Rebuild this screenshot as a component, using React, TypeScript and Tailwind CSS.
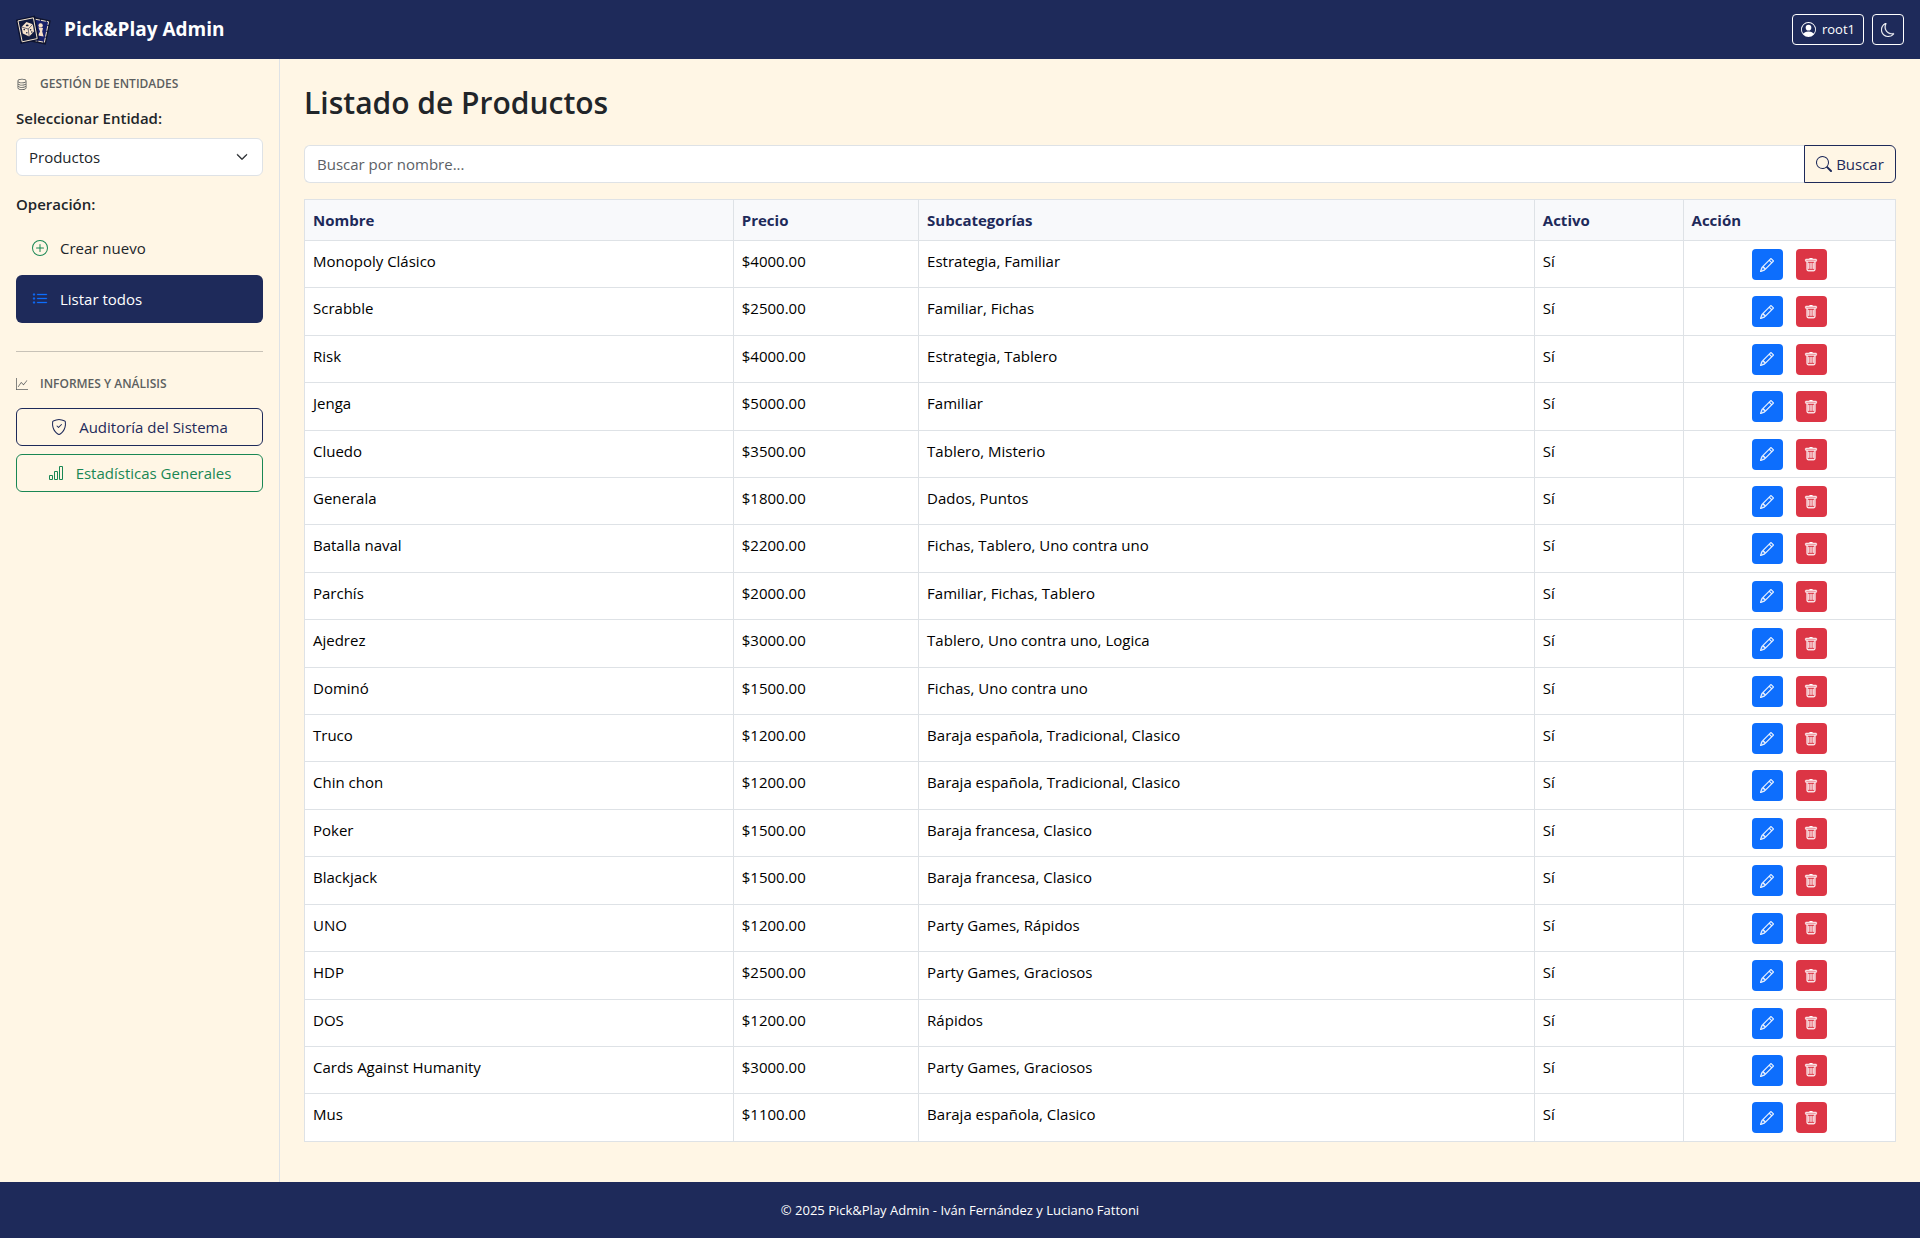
import React from 'react';
import {
  BsBarChart,
  BsChevronDown,
  BsDatabase,
  BsGraphUp,
  BsListUl,
  BsMoon,
  BsPencil,
  BsPersonCircle,
  BsPlusCircle,
  BsSearch,
  BsShieldCheck,
  BsTrash,
} from 'react-icons/bs';

type Product = { name: string; price: string; tags: string };

const products: Product[] = [
  { name: 'Monopoly Clásico', price: '$4000.00', tags: 'Estrategia, Familiar' },
  { name: 'Scrabble', price: '$2500.00', tags: 'Familiar, Fichas' },
  { name: 'Risk', price: '$4000.00', tags: 'Estrategia, Tablero' },
  { name: 'Jenga', price: '$5000.00', tags: 'Familiar' },
  { name: 'Cluedo', price: '$3500.00', tags: 'Tablero, Misterio' },
  { name: 'Generala', price: '$1800.00', tags: 'Dados, Puntos' },
  { name: 'Batalla naval', price: '$2200.00', tags: 'Fichas, Tablero, Uno contra uno' },
  { name: 'Parchís', price: '$2000.00', tags: 'Familiar, Fichas, Tablero' },
  { name: 'Ajedrez', price: '$3000.00', tags: 'Tablero, Uno contra uno, Logica' },
  { name: 'Dominó', price: '$1500.00', tags: 'Fichas, Uno contra uno' },
  { name: 'Truco', price: '$1200.00', tags: 'Baraja española, Tradicional, Clasico' },
  { name: 'Chin chon', price: '$1200.00', tags: 'Baraja española, Tradicional, Clasico' },
  { name: 'Poker', price: '$1500.00', tags: 'Baraja francesa, Clasico' },
  { name: 'Blackjack', price: '$1500.00', tags: 'Baraja francesa, Clasico' },
  { name: 'UNO', price: '$1200.00', tags: 'Party Games, Rápidos' },
  { name: 'HDP', price: '$2500.00', tags: 'Party Games, Graciosos' },
  { name: 'DOS', price: '$1200.00', tags: 'Rápidos' },
  { name: 'Cards Against Humanity', price: '$3000.00', tags: 'Party Games, Graciosos' },
  { name: 'Mus', price: '$1100.00', tags: 'Baraja española, Clasico' },
];

function Logo() {
  return (
    <svg viewBox="0 0 36 30" className="h-[30px] w-9" aria-hidden="true">
      <path d="M18.5 3.2 33.4 6.4 28.8 28.4 14 25.4Z" fill="#151c5c" stroke="#10152f" strokeWidth="2.4" />
      <path d="M19 4.2 32.6 6.8 28.4 27.3 15 24.8Z" fill="#18206a" stroke="#f3e3cb" strokeWidth="1" strokeDasharray="5 1" />
      <circle cx="24.6" cy="10.4" r="2.2" fill="#f8dfc6" />
      <path d="m22.4 12.4 4.6.6-.8 3.6 1.4 4.8-5.6-1 2-4Z" fill="#f8dfc6" />
      <path d="M1.2 5.6 18 2 22 24 5.6 27.6Z" fill="#0e1533" stroke="#0c1230" strokeWidth="2.4" />
      <path d="M2 5.9 17.4 2.8 21.2 23.6 6.2 26.8Z" fill="#111a3e" stroke="#f3e3cb" strokeWidth="1" />
      <path d="m5.6 12 4.8-5 6.4 2.2 1.2 7.2-4.8 5.2-6.4-3Z" fill="#f8e3cb" />
      <path d="m5.6 12 6.6 2 4.6-4.8M12.2 14l1 7.6" fill="none" stroke="#111a3e" strokeWidth=".6" />
      <g fill="#111a3e">
        <ellipse cx="11.2" cy="10.4" rx="1.4" ry=".9" />
        <circle cx="8.2" cy="14.6" r=".8" />
        <circle cx="10.8" cy="17.8" r=".8" />
        <circle cx="14.6" cy="14.8" r=".8" />
        <circle cx="15.8" cy="17" r=".8" />
      </g>
    </svg>
  );
}

function Header() {
  return (
    <header className="flex h-[59px] items-center justify-between bg-[#1e2a5a] px-4 text-white">
      <a href="#inicio" className="flex items-center gap-3">
        <Logo />
        <span className="pb-px text-[19px] leading-7 font-bold">Pick&amp;Play Admin</span>
      </a>
      <div className="flex items-center gap-2">
        <button type="button" className="flex h-[31px] w-[72px] items-center justify-center gap-1.5 rounded border border-white text-[13px]">
          <BsPersonCircle className="size-[15px]" />
          root1
        </button>
        <button type="button" aria-label="Modo oscuro" className="flex h-[31px] w-8 items-center justify-center rounded border border-white">
          <BsMoon className="size-[14px] stroke-[0.3]" />
        </button>
      </div>
    </header>
  );
}

function Sidebar() {
  return (
    <aside className="flex w-[280px] shrink-0 flex-col border-r border-[#dee2e6] px-4 pt-[17px]">
      <h2 className="flex h-4 items-center gap-3 text-xs font-semibold text-[#5c5f5f]">
        <BsDatabase className="size-3" />
        GESTIÓN DE ENTIDADES
      </h2>
      <label htmlFor="entidad" className="mt-3.5 text-[15px] leading-6 font-semibold text-[#212529]">
        Seleccionar Entidad:
      </label>
      <div className="relative mt-2 text-[#212529]">
        <select id="entidad" className="h-[38px] w-full appearance-none rounded-md border border-[#dee2e6] bg-white px-3 text-[15px]">
          <option>Productos</option>
        </select>
        <BsChevronDown className="pointer-events-none absolute top-[13px] right-[15px] size-3 stroke-1" />
      </div>
      <h3 className="mt-4 text-[15px] leading-6 font-semibold text-[#212529]">Operación:</h3>
      <nav className="mt-2 flex flex-col gap-[3px] text-[15px]">
        <a href="#crear" className="flex h-12 items-center gap-3 rounded-md px-4 text-[#212529]">
          <BsPlusCircle className="size-4 text-[#198754]" />
          Crear nuevo
        </a>
        <a href="#listar" className="flex h-12 items-center gap-3 rounded-md bg-[#1e2a5a] px-4 text-white">
          <BsListUl className="size-4 stroke-[0.3] text-[#0d6efd]" />
          Listar todos
        </a>
      </nav>
      <hr className="mt-7 border-[#c8c2b7]" />
      <h2 className="mt-6 flex h-4 items-center gap-3 text-xs font-semibold text-[#5c5f5f]">
        <BsGraphUp className="size-3" />
        INFORMES Y ANÁLISIS
      </h2>
      <div className="mt-4 flex flex-col gap-2 text-[15px]">
        <button type="button" className="flex h-[38px] items-center justify-center gap-3 rounded-md border border-[#1e2a5a] text-[#1e2a5a]">
          <BsShieldCheck className="size-4" />
          Auditoría del Sistema
        </button>
        <button type="button" className="flex h-[38px] items-center justify-center gap-3 rounded-md border border-[#198754] text-[#198754]">
          <BsBarChart className="size-4" />
          Estadísticas Generales
        </button>
      </div>
    </aside>
  );
}

function ProductRow({ product }: { product: Product }) {
  const cell = 'border border-[#dee2e6] px-2 pt-2 pb-1.5 align-top';
  return (
    <tr>
      <td className={cell}>{product.name}</td>
      <td className={cell}>{product.price}</td>
      <td className={cell}>{product.tags}</td>
      <td className={cell}>Sí</td>
      <td className={cell}>
        <div className="flex justify-center gap-[13px] text-white">
          <button type="button" aria-label={`Editar ${product.name}`} className="flex size-[31px] items-center justify-center rounded bg-[#0d6efd]">
            <BsPencil className="size-[14px] stroke-[0.4]" />
          </button>
          <button type="button" aria-label={`Eliminar ${product.name}`} className="flex size-[31px] items-center justify-center rounded bg-[#dc3545]">
            <BsTrash className="size-[14px] stroke-[0.4]" />
          </button>
        </div>
      </td>
    </tr>
  );
}

export default function App() {
  const head = 'border border-[#dee2e6] px-2 font-bold';
  return (
    <div className="flex min-h-screen flex-col bg-[#fff6e5] font-['Open_Sans','Noto_Sans',sans-serif]">
      <Header />
      <div className="flex grow">
        <Sidebar />
        <main className="flex min-w-0 grow flex-col px-6 pt-6 pb-10">
          <h1 className="text-3xl leading-10 font-semibold text-[#212529]">Listado de Productos</h1>
          <form className="mt-[22px] flex h-[38px] text-[15px]">
            <input
              type="search"
              aria-label="Buscar por nombre"
              placeholder="Buscar por nombre..."
              className="min-w-0 grow rounded-l-md border border-r-0 border-[#dee2e6] bg-white px-3 placeholder:text-[#5c6166]"
            />
            <button type="button" className="flex w-[92px] items-center justify-center gap-1 rounded-r-md border border-[#1e2a5a] text-[#1e2a5a]">
              <BsSearch className="size-4" />
              Buscar
            </button>
          </form>
          <div className="mt-4 grid grow">
            <table className="w-full table-fixed border-collapse bg-white text-[15px] leading-6 text-black">
              <colgroup>
                <col className="w-[26.95%]" />
                <col className="w-[11.65%]" />
                <col className="w-[38.7%]" />
                <col className="w-[9.35%]" />
                <col />
              </colgroup>
              <thead>
                <tr className="h-[41px] bg-[#f8f9fb] text-left text-[#1e2a5a]">
                  <th className={head}>Nombre</th>
                  <th className={head}>Precio</th>
                  <th className={head}>Subcategorías</th>
                  <th className={head}>Activo</th>
                  <th className={head}>Acción</th>
                </tr>
              </thead>
              <tbody>
                {products.map((product) => (
                  <ProductRow key={product.name} product={product} />
                ))}
              </tbody>
            </table>
          </div>
        </main>
      </div>
      <footer className="flex h-14 items-center justify-center bg-[#1e2a5a] pt-0.5 text-[13px] text-white">
        © 2025 Pick&amp;Play Admin - Iván Fernández y Luciano Fattoni
      </footer>
    </div>
  );
}
